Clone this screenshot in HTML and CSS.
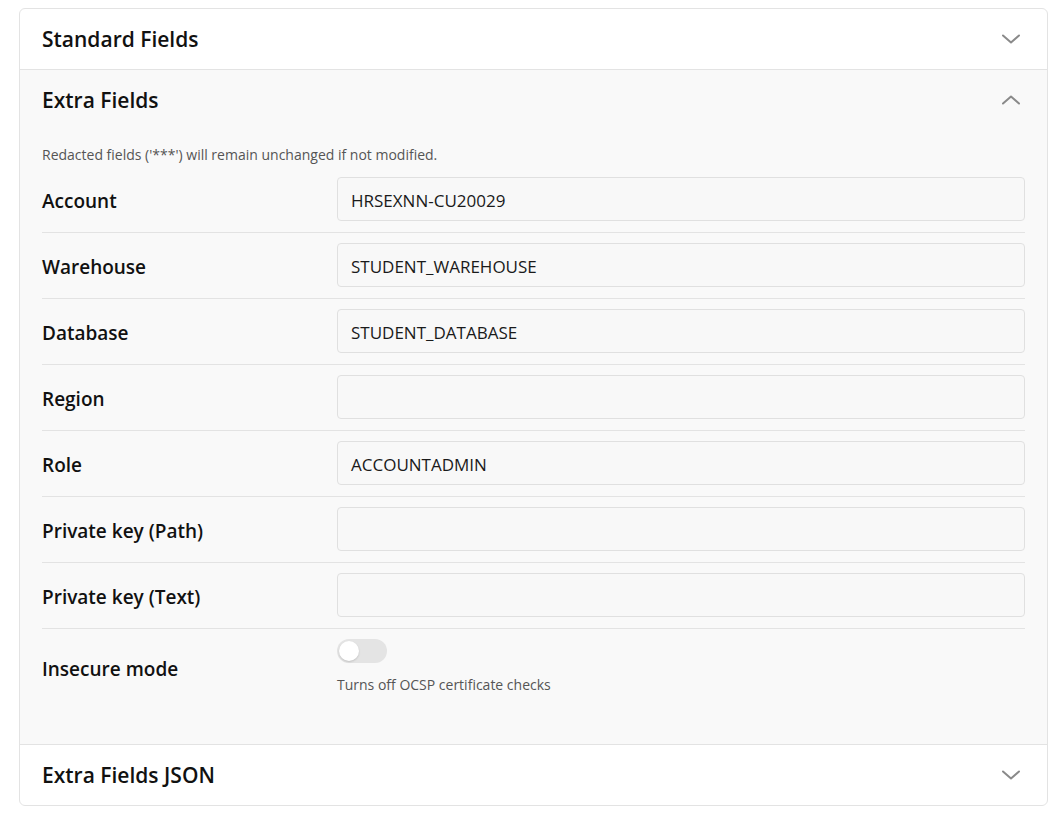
FILE: index.html
```html
<!DOCTYPE html>
<html>
<head>
<meta charset="utf-8">
<link rel="stylesheet" href="styles.css">
</head>
<body>
<div class="card">
  <div class="section-head">
    <span class="section-title">Standard Fields</span>
    <svg class="chev" width="18" height="10" viewBox="0 0 18 10"><path d="M1 1.5 L9 8.5 L17 1.5" fill="none" stroke="#8a8a8a" stroke-width="2" stroke-linecap="round" stroke-linejoin="round"/></svg>
  </div>
  <div class="section open">
    <div class="section-head">
      <span class="section-title">Extra Fields</span>
      <svg class="chev" width="18" height="10" viewBox="0 0 18 10"><path d="M1 8.5 L9 1.5 L17 8.5" fill="none" stroke="#8a8a8a" stroke-width="2" stroke-linecap="round" stroke-linejoin="round"/></svg>
    </div>
    <div class="section-body">
      <p class="note">Redacted fields ('***') will remain unchanged if not modified.</p>
      <div class="row"><label class="lbl">Account</label><div class="input">HRSEXNN-CU20029</div></div>
      <div class="row"><label class="lbl">Warehouse</label><div class="input">STUDENT_WAREHOUSE</div></div>
      <div class="row"><label class="lbl">Database</label><div class="input">STUDENT_DATABASE</div></div>
      <div class="row"><label class="lbl">Region</label><div class="input"></div></div>
      <div class="row"><label class="lbl">Role</label><div class="input">ACCOUNTADMIN</div></div>
      <div class="row"><label class="lbl">Private key (Path)</label><div class="input"></div></div>
      <div class="row"><label class="lbl">Private key (Text)</label><div class="input"></div></div>
      <div class="row last"><label class="lbl">Insecure mode</label>
        <div class="toggle-wrap">
          <div class="toggle"><div class="knob"></div></div>
          <div class="help">Turns off OCSP certificate checks</div>
        </div>
      </div>
    </div>
  </div>
  <div class="section-head bottom">
    <span class="section-title">Extra Fields JSON</span>
    <svg class="chev" width="18" height="10" viewBox="0 0 18 10"><path d="M1 1.5 L9 8.5 L17 1.5" fill="none" stroke="#8a8a8a" stroke-width="2" stroke-linecap="round" stroke-linejoin="round"/></svg>
  </div>
</div>
</body>
</html>
```
FILE: styles.css
```css
html, body {
  margin: 0;
  padding: 0;
  background: #ffffff;
}
body {
  padding: 8px 9px 0 19px;
  font-family: "Open Sans", "Noto Sans", sans-serif;
  color: #1a1a1a;
}
.card {
  width: 1029px;
  box-sizing: border-box;
  border: 1px solid #e3e3e3;
  border-radius: 6px;
  overflow: hidden;
  background: #fff;
}
.section-head {
  height: 60px;
  display: flex;
  align-items: center;
  justify-content: space-between;
  padding: 0 27px 0 22px;
  border-bottom: 1px solid #e3e3e3;
}
.section-head.bottom {
  border-bottom: none;
}
.section-title {
  font-size: 21px;
  font-weight: 600;
  color: #111;
}
.chev {
  display: block;
}
.section.open {
  background: #f9f9f9;
  border-bottom: 1px solid #e3e3e3;
}
.section.open .section-head {
  border-bottom: none;
}
.section-body {
  padding: 15px 22px 39px 22px;
}
.note {
  margin: 0 0 2px 0;
  font-size: 14px;
  color: #555;
  line-height: 20px;
}
.row {
  display: flex;
  align-items: center;
  padding: 10px 0 11px 0;
  border-bottom: 1px solid #e3e3e3;
}
.row.last {
  border-bottom: none;
  align-items: flex-start;
  padding-top: 10px;
}
.lbl {
  width: 295px;
  flex: none;
  font-size: 19px;
  font-weight: 600;
  color: #111;
  padding-top: 3px;
}
.input {
  flex: 1;
  height: 44px;
  box-sizing: border-box;
  border: 1px solid #e0e0e0;
  border-radius: 4px;
  background: #f8f8f8;
  padding: 3px 13px 0 13px;
  display: flex;
  align-items: center;
  font-size: 17px;
  color: #1a1a1a;
}
.row.last .lbl {
  margin-top: 14px;
}
.toggle-wrap {
  display: flex;
  flex-direction: column;
  gap: 12px;
}
.toggle {
  width: 50px;
  height: 24px;
  border-radius: 12px;
  background: #e4e4e4;
  position: relative;
}
.knob {
  position: absolute;
  left: 2px;
  top: 2px;
  width: 20px;
  height: 20px;
  border-radius: 50%;
  background: #fff;
  box-shadow: 0 1px 2px rgba(0,0,0,0.15);
}
.help {
  font-size: 14px;
  color: #555;
}
```
